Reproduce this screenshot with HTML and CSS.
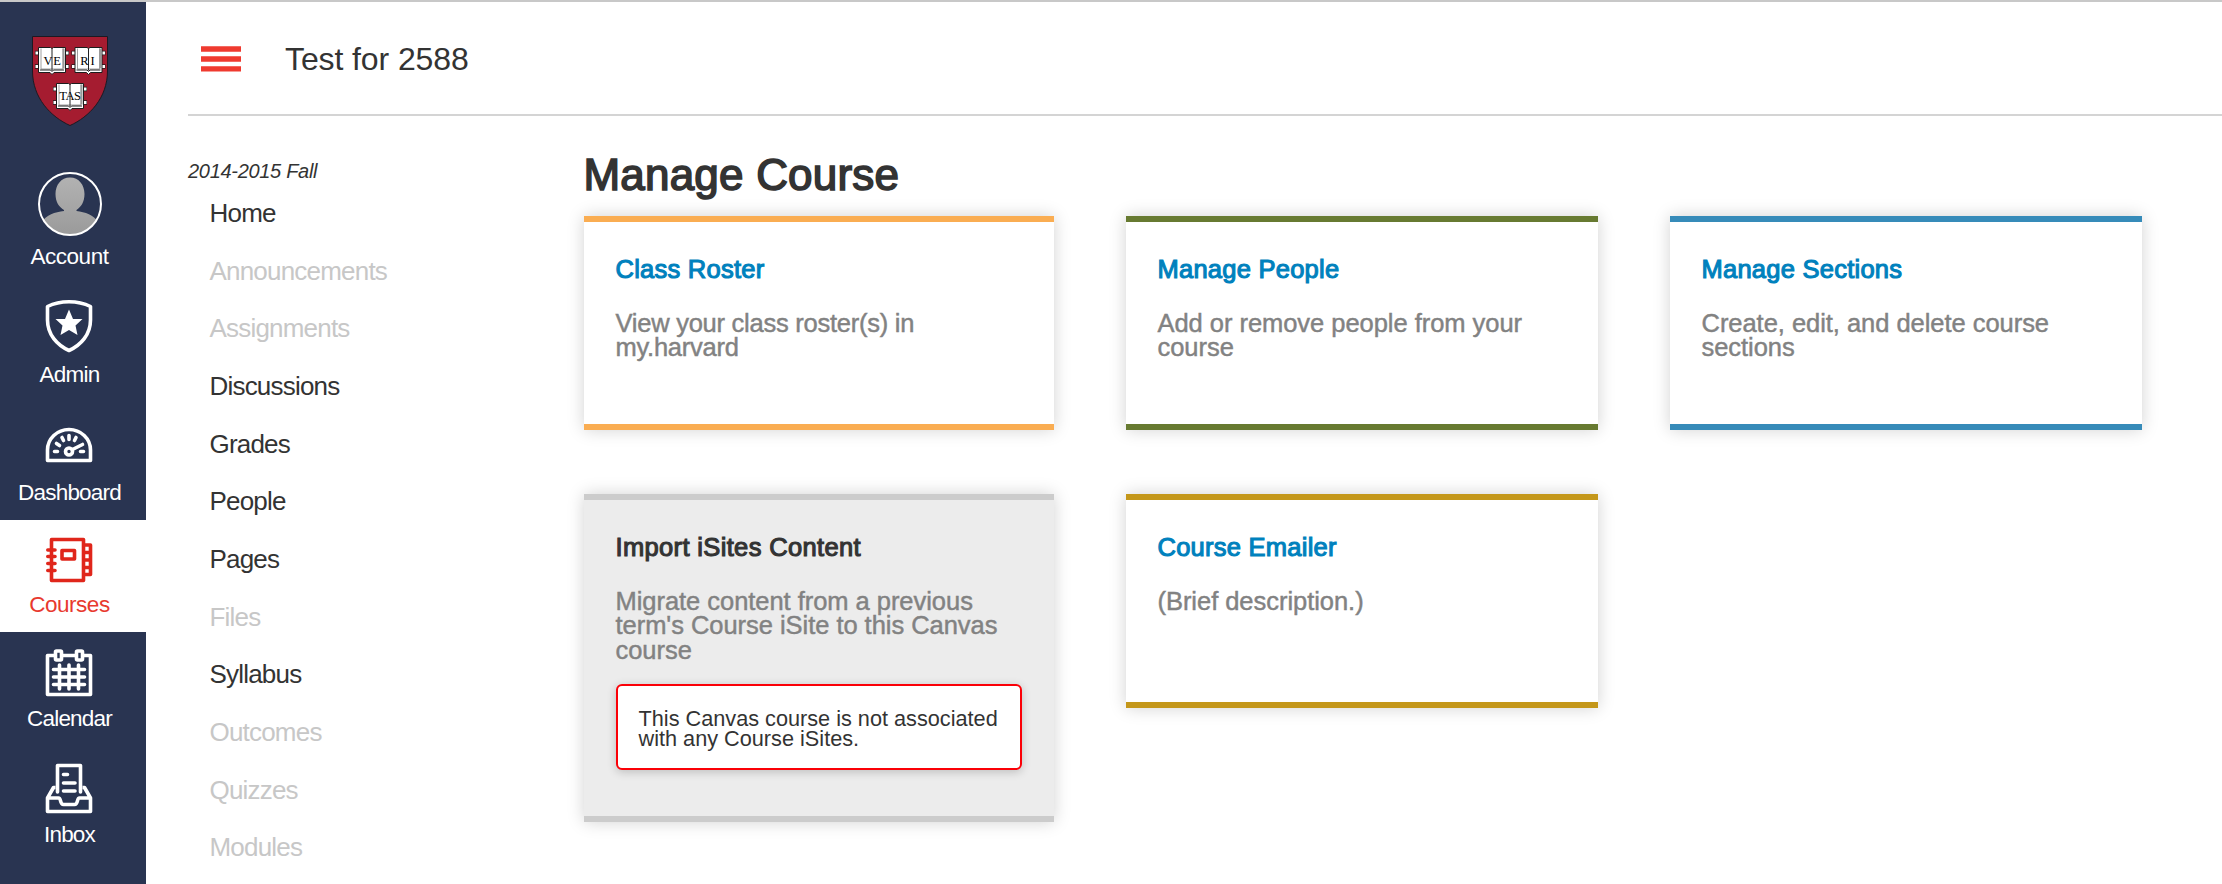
FILE: index.html
```html
<!DOCTYPE html>
<html lang="en">
<head>
<meta charset="utf-8">
<title>Test for 2588</title>
<link rel="stylesheet" href="styles.css">
</head>
<body>
<div class="app">
  <nav class="rail">
    <a class="rail-logo">
      <svg width="76" height="92" viewBox="0 0 76 92">
        <defs>
          <g id="book">
            <path d="M-2 6.500H32M-2 20H32" stroke="#1c1c1c" stroke-width="4.500"/>
            <path d="M-1.500 6.500H31.500M-1.500 20H31.500" stroke="#fff" stroke-width="2.800"/>
            <path d="M1.500 1H13.500L15 2L16.500 1H28.500V26H17L15 28L13 26H1.500Z" fill="#fff" stroke="#1c1c1c" stroke-width="1"/>
            <path d="M4 2V22.500H26V2" fill="none" stroke="#888" stroke-width=".8"/>
            <path d="M26.500 2V22" stroke="#999" stroke-width="2"/>
            <path d="M3 23.500H13.500L15 25L16.500 23.500H27M15 2V24" fill="none" stroke="#222" stroke-width="1"/>
          </g>
        </defs>
        <path d="M.5 .5H75.500V35C75.500 62 57 81 38 89.500C19 81 .5 62 .5 35Z" fill="#a51c30" stroke="#1c1a22"/>
        <use href="#book" x="5" y="10.500"/>
        <use href="#book" x="41.500" y="10.500"/>
        <use href="#book" x="23" y="46.500"/>
        <g class="motto">
          <text x="16" y="28.500">V</text><text x="25" y="28.500">E</text>
          <text x="52.500" y="28.500">R</text><text x="60.500" y="28.500">I</text>
          <text x="31" y="64">T</text><text x="38" y="64">A</text><text x="45.500" y="64">S</text>
        </g>
      </svg>
    </a>
    <a class="rail-item account">
      <svg width="64" height="64" viewBox="0 0 64 64">
        <defs>
          <clipPath id="avatar"><circle cx="32" cy="32" r="31"/></clipPath>
          <linearGradient id="grey" x2="0" y2="1"><stop stop-color="#b2b2b2"/><stop offset="1" stop-color="#999"/></linearGradient>
        </defs>
        <g clip-path="url(#avatar)">
          <path d="M32 5.500C41 5.500 46.500 13 46.500 22C46.500 30 43 35 38.500 38V39C47 40 56 43 60 50V66H4V50C8 43 17 40 26 39V38C21 35 17.500 30 17.500 22C17.500 13 23 5.500 32 5.500Z" fill="url(#grey)"/>
        </g>
        <circle cx="32" cy="32" r="31" fill="none" stroke="#fff" stroke-width="2"/>
      </svg>
      <span>Account</span>
    </a>
    <a class="rail-item admin">
      <svg class="icon" viewBox="0 0 48 56">
        <path d="M2.500 6.500Q12 1.800 24 1.800T45.500 6.500V20C45.500 34.500 36 45 24 50.500C12 45 2.500 34.500 2.500 20Z"/>
        <path class="solid" d="M24 9.500L28 19H37.500L30.500 25.500L32.500 35L24 30L15.500 35L17.500 25.500L10.500 19H20Z"/>
      </svg>
      <span>Admin</span>
    </a>
    <a class="rail-item dashboard">
      <svg class="icon" viewBox="0 0 48 56">
        <path d="M2.500 42.500V32A21.500 20.500 0 0 1 45.500 32V42.500Z"/>
        <path class="round" d="M9.500 33.500H12.500M11.500 25.500L14.500 27.500M17 19.500L18.500 22.500M24 17.500V21.500M31 19.500L29.500 22.500M35.500 33.500H38.500M27.500 31.500L37.500 26.500"/>
        <circle cx="24" cy="33.500" r="3.500"/>
      </svg>
      <span>Dashboard</span>
    </a>
    <a class="rail-item courses active">
      <svg class="icon" viewBox="0 0 48 56">
        <path d="M6.500 9.500H38.500V50.500H6.500ZM17 20.500H29.500V29H17ZM38.500 15H45.500V44.500H38.500M38.500 22.500H45.500M38.500 30H45.500M38.500 37.500H45.500"/>
        <path class="round" d="M2.800 20H10M2.800 26.500H10M2.800 33.500H10M2.800 40.500H10"/>
      </svg>
      <span>Courses</span>
    </a>
    <a class="rail-item calendar">
      <svg class="icon" viewBox="0 0 48 56">
        <path d="M10 11.500H2.500V50.500H45.500V11.500H38M17 11.500H31"/>
        <rect x="10.500" y="7" width="6" height="9" rx="1"/><rect x="31.500" y="7" width="6" height="9" rx="1"/>
        <path class="round" d="M8.500 25.500H39.500M8.500 33H39.500M8.500 40.500H39.500M14.500 21V45M24 21V45M33.500 21V45"/>
      </svg>
      <span>Calendar</span>
    </a>
    <a class="rail-item inbox">
      <svg class="icon" viewBox="0 0 48 56">
        <path class="round" d="M12.500 32V5.500H35.500V32M18.500 14.500H22.500M18.500 23H30M18.500 31H30"/>
        <path d="M10.500 27.500H8.500L2.500 38V51.500H45.500V38L39.500 27.500H37.500M2.500 38H13.500C16.500 38 14.500 44.500 18.500 44.500H29.500C33.500 44.500 31.500 38 34.500 38H45.500"/>
      </svg>
      <span>Inbox</span>
    </a>
  </nav>

  <div class="page">
    <header class="topbar">
      <svg class="burger" width="40" height="26" viewBox="0 0 40 26" fill="#ef3a2f"><path d="M0 .2H40V5.700H0ZM0 10.200H40V15.700H0ZM0 20.200H40V25.500H0Z"/></svg>
      <span class="crumb">Test for 2588</span>
    </header>
    <div class="body">
      <aside class="course-nav">
        <div class="term">2014-2015 Fall</div>
        <ul class="links">
          <li>Home</li>
          <li class="off">Announcements</li>
          <li class="off">Assignments</li>
          <li>Discussions</li>
          <li>Grades</li>
          <li>People</li>
          <li>Pages</li>
          <li class="off">Files</li>
          <li>Syllabus</li>
          <li class="off">Outcomes</li>
          <li class="off">Quizzes</li>
          <li class="off">Modules</li>
        </ul>
      </aside>
      <main class="content">
        <h1>Manage Course</h1>
        <div class="cards">
          <section class="card roster">
            <h2>Class Roster</h2>
            <p>View your class roster(s) in my.harvard</p>
          </section>
          <section class="card people">
            <h2>Manage People</h2>
            <p>Add or remove people from your course</p>
          </section>
          <section class="card sections">
            <h2>Manage Sections</h2>
            <p>Create, edit, and delete course sections</p>
          </section>
          <section class="card import">
            <h2>Import iSites Content</h2>
            <p>Migrate content from a previous term's Course iSite to this Canvas course</p>
            <div class="notice">This Canvas course is not associated with any Course iSites.</div>
          </section>
          <section class="card emailer">
            <h2>Course Emailer</h2>
            <p>(Brief description.)</p>
          </section>
        </div>
      </main>
    </div>
  </div>
</div>
</body>
</html>
```

FILE: styles.css
```css
* { box-sizing: border-box; }
body {
  margin: 0;
  background: #fff;
  color: #333;
  font-family: "Liberation Sans", Arial, sans-serif;
}
.app {
  display: flex;
  height: 884px;
  overflow: hidden;
  border-top: 2px solid #c8c8c8;
}

/* Global navigation rail */
.rail {
  flex: none;
  width: 146px;
  display: flex;
  flex-direction: column;
  background: #293451;
}
.rail-logo {
  height: 160px;
  padding: 34px 6px 0 0;
  text-align: center;
}
.motto {
  font-family: "Liberation Serif", serif;
  font-size: 12.5px;
  text-anchor: middle;
  fill: #000;
}
.rail-item {
  display: flex;
  flex-direction: column;
  align-items: center;
  gap: 5px;
  padding-right: 6px;
  color: #fff;
  font-size: 22.5px;
  line-height: 28px;
  letter-spacing: -0.8px;
}
.rail-item span { margin-right: 1px; }
.account { height: 118px; padding-top: 10px; gap: 7px; }
.admin { height: 118px; padding-top: 20px; }
.dashboard { height: 122px; padding-top: 20px; }
.courses { height: 112px; padding-top: 10px; }
.calendar { height: 116px; padding-top: 12px; }
.inbox { height: 116px; padding-top: 12px; }
.rail-item.active { background: #fff; color: #e8392e; }
.account span, .courses span { letter-spacing: -0.5px; }
.icon {
  width: 48px;
  height: 56px;
  margin-right: 2px;
  fill: none;
  stroke: #fff;
  stroke-width: 3.6;
  stroke-linejoin: round;
}
.active .icon { stroke: #e0261b; }
.icon .solid { fill: #fff; stroke: none; }
.icon .round { stroke-linecap: round; }

/* Page header */
.page { flex: 1; padding-left: 42px; min-width: 0; }
.topbar {
  display: flex;
  align-items: flex-start;
  gap: 44px;
  height: 114px;
  padding: 39px 0 0 13px;
  border-bottom: 2px solid #d4d4d4;
}
.burger { margin-top: 5px; }
.crumb { font-size: 32px; line-height: 36px; letter-spacing: -0.1px; }

.body { display: flex; }
.course-nav { width: 395.5px; padding-top: 43px; }
.term {
  font-size: 20px;
  line-height: 24px;
  font-style: italic;
  letter-spacing: -0.3px;
}
.links {
  margin: 2px 0 0;
  padding: 0 0 0 21.5px;
  list-style: none;
  font-size: 26px;
  line-height: 57.66px;
  letter-spacing: -0.8px;
}
.links .off { color: #c7c7c7; }

/* Course tools */
.content { padding-top: 35px; }
h1 {
  margin: 0 0 17px;
  font-size: 44px;
  line-height: 48px;
  font-weight: 400;
  letter-spacing: 0.2px;
  -webkit-text-stroke: 1.6px currentColor;
}
.cards {
  display: grid;
  grid-template-columns: 470px 472px 472px;
  gap: 64px 72px;
  align-items: start;
}
.card {
  min-height: 214px;
  padding: 35px 32px 46px;
  border: solid #ccc;
  border-width: 6px 0;
  background: #fff;
  box-shadow: 0 0 16px rgba(0, 0, 0, 0.18);
}
.card h2 {
  margin: 0 0 30px;
  color: #0081bd;
  font-size: 25.5px;
  line-height: 24px;
  font-weight: 400;
  letter-spacing: 0.25px;
  -webkit-text-stroke: 1.1px currentColor;
}
.card p {
  margin: 0;
  color: #828282;
  font-size: 25.5px;
  line-height: 24.3px;
  letter-spacing: -0.04px;
  -webkit-text-stroke: 0.45px currentColor;
}
.roster { border-color: #faad52; }
.roster p { letter-spacing: -0.25px; }
.people { border-color: #677a31; }
.sections { border-color: #368bb9; }
.emailer { border-color: #c4971a; }
.import { background: #ececec; }
.import h2 { color: #333; letter-spacing: 0.35px; }
.notice {
  height: 86px;
  margin-top: 22px;
  padding: 23px 0 0 21px;
  border: 2px solid #fb0007;
  border-radius: 6px;
  background: #fff;
  box-shadow: 0 2px 10px rgba(0, 0, 0, 0.2);
  font-size: 21.7px;
  line-height: 20px;
}
```
